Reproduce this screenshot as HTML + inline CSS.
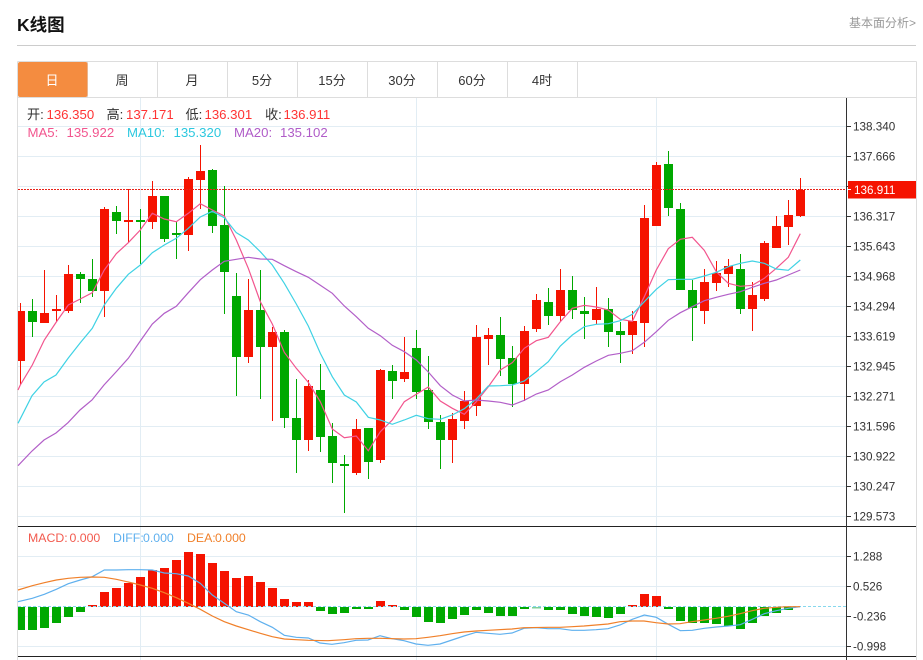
<!DOCTYPE html>
<html lang="zh">
<head>
<meta charset="utf-8">
<title>K线图</title>
<style>
html,body{margin:0;padding:0;background:#fff;width:923px;height:660px;overflow:hidden}
svg{display:block;position:absolute;left:0;top:0}
text{font-family:"Liberation Sans","Noto Sans CJK SC",sans-serif}
.ax{font-size:11.7px;fill:#333}
.tab{font-size:13px;fill:#333;text-anchor:middle}
.i{font-size:13.2px}
.k{fill:#333}
.r{fill:#f33}
.m5{fill:#f2558e}
.m10{fill:#2cc8df}
.m20{fill:#b05cc8}
.m{font-size:12.3px}
</style>
</head>
<body>
<svg width="923" height="660" viewBox="0 0 923 660" xmlns="http://www.w3.org/2000/svg">
<text x="17" y="31" font-size="17.5" font-weight="700" fill="#111">K线图</text>
<text x="849" y="27" font-size="12" fill="#999">基本面分析&gt;</text>
<path d="M17 45.5H916" stroke="#ccc" fill="none"/>

<!-- frame -->
<path d="M17.5 61.5H916.5M17.5 61.5V660M916.5 61.5V660M17.5 97.5H916.5M157.5 62V97M227.5 62V97M297.5 62V97M367.5 62V97M437.5 62V97M507.5 62V97M577.5 62V97M87.5 62V97" stroke="#ddd" fill="none"/>
<rect x="18" y="62" width="69.5" height="35" rx="2" fill="#f48c40"/>
<text class="tab" x="52" y="85" style="fill:#fff">日</text>
<text class="tab" x="122" y="85">周</text>
<text class="tab" x="192" y="85">月</text>
<text class="tab" x="262" y="85">5分</text>
<text class="tab" x="332" y="85">15分</text>
<text class="tab" x="402" y="85">30分</text>
<text class="tab" x="472" y="85">60分</text>
<text class="tab" x="542" y="85">4时</text>

<!-- grid -->
<path d="M18 126.5H846M18 156.5H846M18 186.5H846M18 216.5H846M18 246.5H846M18 276.5H846M18 306.5H846M18 336.5H846M18 366.5H846M18 396.5H846M18 426.5H846M18 456.5H846M18 486.5H846M18 516.5H846M18 556.5H846M18 586.5H846M18 616.5H846M18 646.5H846M140.5 98V660M416.5 98V660M656.5 98V660" stroke="#e2edf4" fill="none"/>

<!-- red candles -->
<path stroke="#f51300" fill="none" d="M20.5 303V385M44.5 270V323M56.5 295V322M68.5 265V313M104.5 207V317M128.5 189V243M152.5 181V229M188.5 177V251M200.5 145V209M248.5 279V363M272.5 327V421M308.5 380V451M356.5 419V475M380.5 369V463M404.5 337V382M452.5 413V463M464.5 391V429M476.5 325V416M488.5 328V365M524.5 326V401M536.5 294V332M560.5 269V321M596.5 287V324M632.5 311V354M644.5 205V347M656.5 162V226M704.5 269V324M716.5 261V291M728.5 259V287M752.5 282V331M764.5 241V301M776.5 216V248M788.5 200V245M800.5 178V217"/>
<path fill="#f51300" d="M18 311h7v50h-7zM40 313h9v10h-9zM52 309h9v2h-9zM64 274h9v37h-9zM100 209h9v82h-9zM124 220h9v2h-9zM148 196h9v26h-9zM184 179h9v56h-9zM196 171h9v9h-9zM244 310h9v47h-9zM268 332h9v15h-9zM304 386h9v54h-9zM352 429h9v44h-9zM376 370h9v90h-9zM400 372h9v7h-9zM448 419h9v21h-9zM460 401h9v20h-9zM472 337h9v69h-9zM484 335h9v4h-9zM520 331h9v53h-9zM532 300h9v29h-9zM556 290h9v26h-9zM592 309h9v11h-9zM628 321h9v14h-9zM640 218h9v105h-9zM652 165h9v61h-9zM700 282h9v29h-9zM712 273h9v10h-9zM724 266h9v8h-9zM748 295h9v14h-9zM760 243h9v56h-9zM772 226h9v22h-9zM784 215h9v12h-9zM796 190h9v26h-9z"/>
<!-- green candles -->
<path stroke="#00a800" fill="none" d="M32.5 299V337M80.5 272V303M92.5 259V297M116.5 206V234M140.5 209V264M164.5 196V242M176.5 222V259M212.5 169V233M224.5 186V314M236.5 273V396M260.5 270V399M284.5 330V428M296.5 379V473M320.5 364V452M332.5 423V483M344.5 455V513M368.5 428V479M392.5 365V399M416.5 330V399M428.5 356V429M440.5 415V469M500.5 317V376M512.5 346V407M548.5 288V325M572.5 276V319M584.5 297V339M608.5 298V347M620.5 322V363M668.5 151V216M680.5 203V290M692.5 280V341M740.5 254V314"/>
<path fill="#00a800" d="M28 311h9v11h-9zM76 274h9v5h-9zM88 279h9v12h-9zM112 212h9v9h-9zM136 220h9v2h-9zM160 196h9v43h-9zM172 233h9v2h-9zM208 170h9v56h-9zM220 225h9v47h-9zM232 296h9v61h-9zM256 310h9v37h-9zM280 332h9v86h-9zM292 418h9v22h-9zM316 390h9v47h-9zM328 436h9v27h-9zM340 464h9v2h-9zM364 428h9v34h-9zM388 371h9v10h-9zM412 348h9v44h-9zM424 390h9v32h-9zM436 422h9v18h-9zM496 335h9v24h-9zM508 358h9v26h-9zM544 302h9v14h-9zM568 290h9v20h-9zM580 311h9v3h-9zM604 309h9v23h-9zM616 331h9v4h-9zM664 164h9v44h-9zM676 209h9v81h-9zM688 290h9v18h-9zM736 269h9v40h-9z"/>

<!-- MA lines -->
<polyline fill="none" stroke="#f2558e" stroke-width="1.2" points="18,390 20.3,385 32.3,365 44.3,340 56.3,322 68.3,305 80.3,299 92.3,292.7 104.3,270 116.3,253.7 128.3,242.7 140.3,230 152.3,213.3 164.3,219 176.3,221.7 188.3,213.3 200.3,203.7 212.3,210 224.3,216 236.3,240 248.3,268.3 260.3,301.7 272.3,324 284.3,352.3 296.3,368.3 308.3,382.3 320.3,401.7 332.3,429 344.3,437.7 356.3,436 368.3,450.7 380.3,431.7 392.3,420 404.3,401.7 416.3,394.3 428.3,387 440.3,401 452.3,408.3 464.3,414.3 476.3,401.7 488.3,386.7 500.3,370 512.3,362.7 524.3,348.3 536.3,340.7 548.3,337.3 560.3,321.7 572.3,308.3 584.3,305.3 596.3,307 608.3,310 620.3,319.3 632.3,321.3 644.3,296.7 656.3,270 668.3,248.7 680.3,239.3 692.3,237.3 704.3,250.3 716.3,271.7 728.3,283.3 740.3,286.3 752.3,285.3 764.3,278.3 776.3,268.3 788.3,257.3 800.3,233.7"/>
<polyline fill="none" stroke="#3fd2e4" stroke-width="1.2" points="18,423.3 32,395.7 44,382 56,375 68.3,358 80.3,342.7 92.3,328.3 104.3,305 116.3,288.3 128.3,274.3 140.3,265 152.3,252.7 164.3,245 176.3,238.3 188.3,228.3 200.3,217 212.3,211.3 224.3,217.7 236.3,232.7 248.3,240 260.3,251.7 272.3,265 284.3,283.3 296.3,304 308.3,326 320.3,353.3 332.3,376.7 344.3,395 356.3,402 368.3,417.3 380.3,420 392.3,424.3 404.3,420 416.3,415.3 428.3,418.7 440.3,419.3 452.3,415 464.3,408.7 476.3,399 488.3,386 500.3,385.7 512.3,385 524.3,381 536.3,371.7 548.3,361.7 560.3,346 572.3,335 584.3,326.7 596.3,324.3 608.3,323.7 620.3,320.7 632.3,314.3 644.3,301.7 656.3,289.3 668.3,279.7 680.3,279.3 692.3,279.3 704.3,276 716.3,272.3 728.3,266.7 740.3,263.3 752.3,261 764.3,263.3 776.3,269 788.3,270.3 800.3,260"/>
<polyline fill="none" stroke="#b25fc8" stroke-width="1.2" points="18,465.7 32,451 44,440 56,433 68,422.7 80,410 92,400 104,385 116,372 128.3,358.3 140.3,341 152.3,324 164.3,313.3 176.3,306.3 188.3,292.7 200.3,279.7 212.3,270 224.3,261.3 236.3,259.3 248.3,257.3 260.3,259 272.3,259.3 284.3,265.7 296.3,271.7 308.3,277.3 320.3,285.3 332.3,293.3 344.3,306 356.3,316.7 368.3,328.3 380.3,335.7 392.3,345.3 404.3,351.7 416.3,360 428.3,372 440.3,385.7 452.3,395 464.3,401 476.3,400 488.3,401 500.3,402.3 512.3,405 524.3,400.3 536.3,394 548.3,390 560.3,381.7 572.3,375 584.3,367.3 596.3,361 608.3,355.3 620.3,353.3 632.3,350.7 644.3,342.3 656.3,331.7 668.3,320.3 680.3,312.7 692.3,306.7 704.3,300.7 716.3,297.3 728.3,294.3 740.3,291.7 752.3,287.3 764.3,283.3 776.3,280 788.3,275 800.3,270"/>

<!-- price line -->
<path d="M18 189.5H846" stroke="#e8231a" stroke-dasharray="2 1" fill="none"/>

<!-- MACD bars -->
<path fill="#f51300" d="M88 605h9v2h-9zM100 592h9v15h-9zM112 588h9v19h-9zM124 583h9v24h-9zM136 577h9v30h-9zM148 570h9v37h-9zM160 568h9v39h-9zM172 560h9v47h-9zM184 552h9v55h-9zM196 554h9v53h-9zM208 563h9v44h-9zM220 571h9v36h-9zM232 578h9v29h-9zM244 576h9v31h-9zM256 582h9v25h-9zM268 588h9v19h-9zM280 599h9v8h-9zM292 602h9v5h-9zM304 602h9v5h-9zM376 601h9v6h-9zM388 605h9v2h-9zM628 605h9v2h-9zM640 594h9v13h-9zM652 596h9v11h-9z"/>
<path fill="#00a800" d="M18 607h7v23h-7zM28 607h9v23h-9zM40 607h9v21h-9zM52 607h9v16h-9zM64 607h9v10h-9zM76 607h9v5h-9zM316 607h9v4h-9zM328 607h9v7h-9zM340 607h9v6h-9zM352 607h9v2h-9zM364 607h9v2h-9zM400 607h9v3h-9zM412 607h9v10h-9zM424 607h9v15h-9zM436 607h9v16h-9zM448 607h9v12h-9zM460 607h9v8h-9zM472 607h9v3h-9zM484 607h9v6h-9zM496 607h9v9h-9zM508 607h9v9h-9zM520 607h9v2h-9zM544 607h9v3h-9zM556 607h9v3h-9zM568 607h9v7h-9zM580 607h9v9h-9zM592 607h9v10h-9zM604 607h9v11h-9zM616 607h9v7h-9zM664 607h9v2h-9zM676 607h9v14h-9zM688 607h9v16h-9zM700 607h9v16h-9zM712 607h9v17h-9zM724 607h9v19h-9zM736 607h9v22h-9zM748 607h9v16h-9zM760 607h9v9h-9zM772 607h9v6h-9zM784 607h9v3h-9z"/>
<path fill="#7fd09a" d="M532 607h9v1.5h-9z"/>
<path d="M18 606.5H846" stroke="#86d8ee" stroke-dasharray="3 2" fill="none"/>
<polyline fill="none" stroke="#5fb0ee" stroke-width="1.2" points="18,601.7 32.3,598.3 44.3,594.3 56.3,589.3 68.3,583.7 80.3,580 92.3,576.7 104.3,570 116.3,570 128.3,569.7 140.3,569.7 152.3,570 164.3,573 176.3,573.7 188.3,576 200.3,583.3 212.3,595 224.3,603.3 236.3,611.7 248.3,615 260.3,621.7 272.3,627.3 284.3,635.3 296.3,637.3 308.3,638 320,643 332,644.3 344,642.7 356,640.3 368,640 380,635.7 392,638.7 404,640.7 416,644 428,645.3 440,644 452,640 464,636 476,632.3 488,633.3 500,634.3 512,633 524,628.3 536,627.7 548,628.7 560,628.7 572,630.3 584,630.3 596,629.7 608,628.7 620,625 632.3,619.3 644.3,615 656.3,617.3 668.3,624.3 680.3,630.7 692.3,630.3 704.3,628.3 716.3,627 728.3,626 740.3,624.7 752.3,619.3 764.3,613.7 776.3,610.7 788.3,608.3 800.3,606.7"/>
<polyline fill="none" stroke="#f0802a" stroke-width="1.2" points="18,590 32.3,585.7 44.3,582.7 56.3,580 68.3,578.3 80.3,577.3 92.3,577 104.3,577.3 116.3,579.3 128.3,582 140.3,585 152.3,588.3 164.3,592.7 176.3,597.7 188.3,603.3 200.3,609.3 212.3,616 224.3,621.7 236.3,626 248.3,629.7 260.3,633.3 272.3,636.7 284.3,639 296.3,639.7 308.3,640.3 328,640.7 344,639.7 356,638.7 368,638.3 380,638.3 404,639 416,638.7 428,637.3 440,635.7 452,633.7 464,632 476,631 488,630.3 512,629 524,627.7 548,627.3 560,627.3 572,626.7 584,626 596,625 608,624 620,621.7 632,621 644,621 656,622.7 668,624 680,623.7 692,621.7 704,620 716,618.3 728,616.3 740,613.7 752,610.7 764,608.3 776,607.3 788,606.7 800,606.7"/>

<!-- panel lines -->
<path d="M18 526.5H916M18 656.5H916" stroke="#222" fill="none"/>
<path d="M846.5 98V660M847 126.5h4M847 156.5h4M847 186.5h4M847 216.5h4M847 246.5h4M847 276.5h4M847 306.5h4M847 336.5h4M847 366.5h4M847 396.5h4M847 426.5h4M847 456.5h4M847 486.5h4M847 516.5h4M847 556.5h4M847 586.5h4M847 616.5h4M847 646.5h4" stroke="#333" fill="none"/>

<!-- axis labels -->
<g class="ax">
<text class="ax" x="853" y="130.5">138.340</text>
<text class="ax" x="853" y="160.5">137.666</text>
<text class="ax" x="853" y="220.5">136.317</text>
<text class="ax" x="853" y="250.5">135.643</text>
<text class="ax" x="853" y="280.5">134.968</text>
<text class="ax" x="853" y="310.5">134.294</text>
<text class="ax" x="853" y="340.5">133.619</text>
<text class="ax" x="853" y="370.5">132.945</text>
<text class="ax" x="853" y="400.5">132.271</text>
<text class="ax" x="853" y="430.5">131.596</text>
<text class="ax" x="853" y="460.5">130.922</text>
<text class="ax" x="853" y="490.5">130.247</text>
<text class="ax" x="853" y="520.5">129.573</text>
<text class="ax" x="853" y="560.5">1.288</text>
<text class="ax" x="853" y="590.5">0.526</text>
<text class="ax" x="853" y="620.5">-0.236</text>
<text class="ax" x="853" y="650.5">-0.998</text>
</g>
<rect x="848" y="181" width="68" height="17.5" fill="#f51300"/>
<path d="M847 189.5h4" stroke="#fff" fill="none"/>
<text x="854" y="194" font-size="11.7" fill="#fff">136.911</text>

<!-- legends -->
<text class="i k" x="27" y="119">开:</text><text class="i r" x="46.5" y="119">136.350</text>
<text class="i k" x="106.5" y="119">高:</text><text class="i r" x="126" y="119">137.171</text>
<text class="i k" x="185.5" y="119">低:</text><text class="i r" x="204.5" y="119">136.301</text>
<text class="i k" x="265" y="119">收:</text><text class="i r" x="283.5" y="119">136.911</text>
<text class="i m5" x="27.5" y="137">MA5:</text><text class="i m5" x="66.5" y="137">135.922</text>
<text class="i m10" x="127" y="137">MA10:</text><text class="i m10" x="173.5" y="137">135.320</text>
<text class="i m20" x="234" y="137">MA20:</text><text class="i m20" x="280" y="137">135.102</text>
<text class="m" x="28" y="542" fill="#f25a4e">MACD:</text><text class="m" x="69.5" y="542" fill="#f25a4e">0.000</text>
<text class="m" x="113" y="542" fill="#5fb0ee">DIFF:</text><text class="m" x="143" y="542" fill="#5fb0ee">0.000</text>
<text class="m" x="187" y="542" fill="#f0802a">DEA:</text><text class="m" x="215" y="542" fill="#f0802a">0.000</text>
</svg>
</body>
</html>
